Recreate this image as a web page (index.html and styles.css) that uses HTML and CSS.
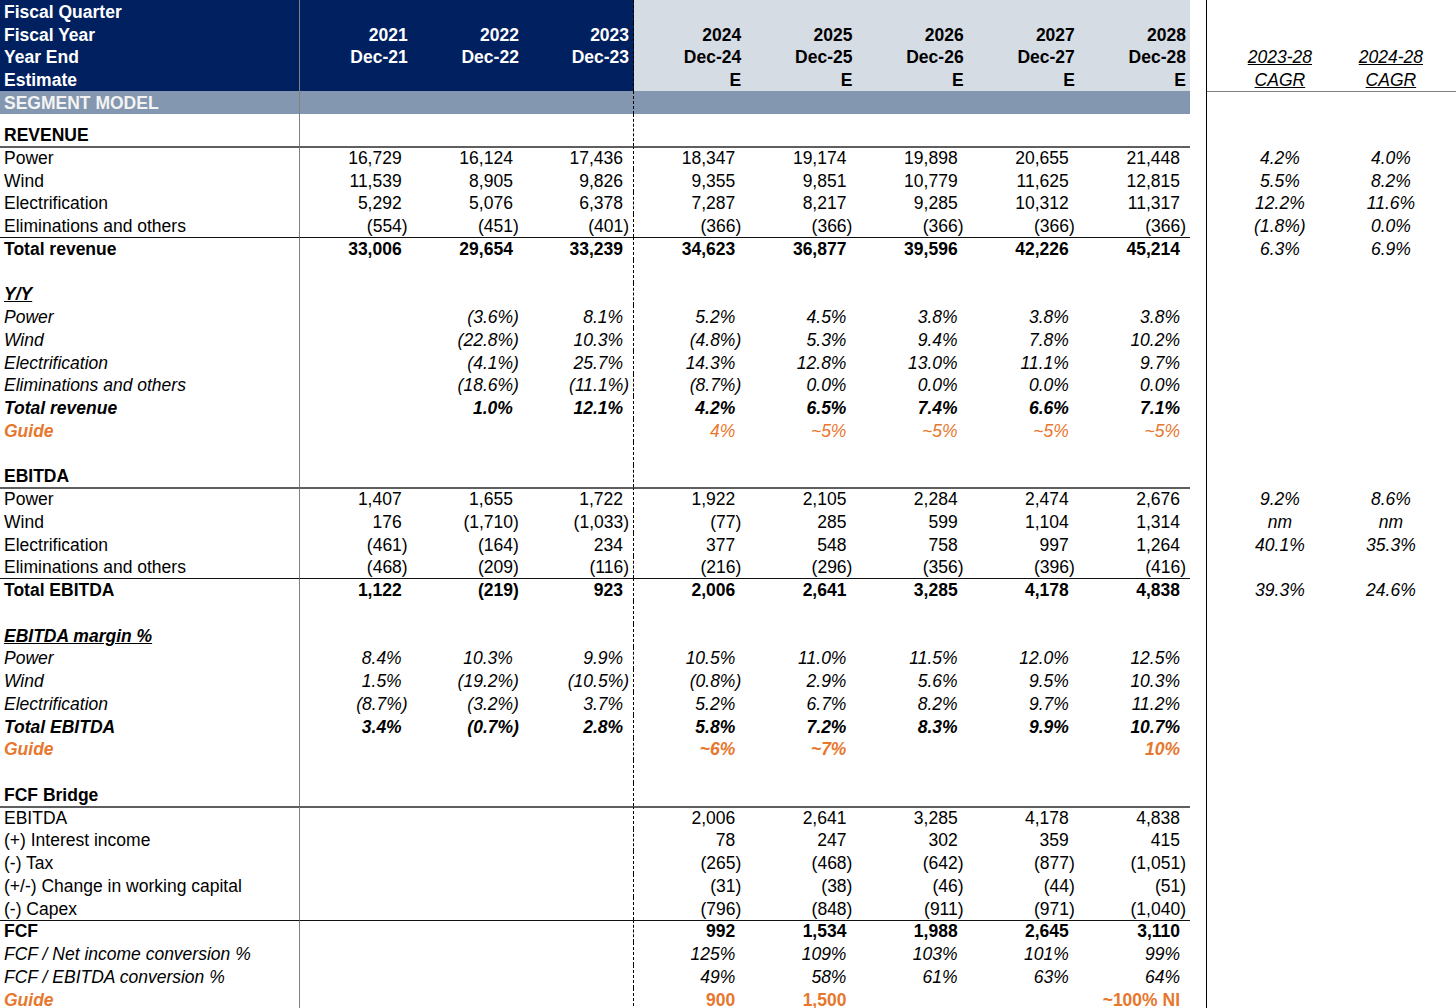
FILE: index.html
```html
<!DOCTYPE html>
<html>
<head>
<meta charset="utf-8">
<title>Segment Model</title>
<link rel="stylesheet" href="styles.css">
</head>
<body>
<div class="sheet">
  <div class="r hd"><div>Fiscal Quarter</div><div></div><div></div><div></div><div></div><div></div><div></div><div></div><div></div><div></div></div>
  <div class="r hd"><div>Fiscal Year</div><div>2021</div><div>2022</div><div>2023</div><div>2024</div><div>2025</div><div>2026</div><div>2027</div><div>2028</div><div></div></div>
  <div class="r hd"><div>Year End</div><div>Dec-21</div><div>Dec-22</div><div>Dec-23</div><div>Dec-24</div><div>Dec-25</div><div>Dec-26</div><div>Dec-27</div><div>Dec-28</div><div></div><div></div><div><span class="u">2023-28</span></div><div><span class="u">2024-28</span></div></div>
  <div class="r hd"><div>Estimate</div><div></div><div></div><div></div><div>E</div><div>E</div><div>E</div><div>E</div><div>E</div><div></div><div></div><div><span class="u">CAGR</span></div><div><span class="u">CAGR</span></div></div>
  <div class="r seg"><div>SEGMENT MODEL</div><div></div><div></div><div></div><div></div><div></div><div></div><div></div><div></div><div></div><div></div><div></div><div></div><div></div></div>

  <div class="r tall b"><div>REVENUE</div><div></div><div></div><div></div><div></div><div></div><div></div><div></div><div></div><div></div></div>
  <div class="r tg"><div>Power</div><div>16,729</div><div>16,124</div><div>17,436</div><div>18,347</div><div>19,174</div><div>19,898</div><div>20,655</div><div>21,448</div><div></div><div></div><div>4.2%</div><div>4.0%</div></div>
  <div class="r"><div>Wind</div><div>11,539</div><div>8,905</div><div>9,826</div><div>9,355</div><div>9,851</div><div>10,779</div><div>11,625</div><div>12,815</div><div></div><div></div><div>5.5%</div><div>8.2%</div></div>
  <div class="r"><div>Electrification</div><div>5,292</div><div>5,076</div><div>6,378</div><div>7,287</div><div>8,217</div><div>9,285</div><div>10,312</div><div>11,317</div><div></div><div></div><div>12.2%</div><div>11.6%</div></div>
  <div class="r"><div>Eliminations and others</div><div><span class="ng">(554)</span></div><div><span class="ng">(451)</span></div><div><span class="ng">(401)</span></div><div><span class="ng">(366)</span></div><div><span class="ng">(366)</span></div><div><span class="ng">(366)</span></div><div><span class="ng">(366)</span></div><div><span class="ng">(366)</span></div><div></div><div></div><div>(1.8%)</div><div>0.0%</div></div>
  <div class="r tk b"><div>Total revenue</div><div>33,006</div><div>29,654</div><div>33,239</div><div>34,623</div><div>36,877</div><div>39,596</div><div>42,226</div><div>45,214</div><div></div><div></div><div>6.3%</div><div>6.9%</div></div>
  <div class="r"><div></div><div></div><div></div><div></div><div></div><div></div><div></div><div></div><div></div><div></div></div>

  <div class="r"><div><span class="sh">Y/Y</span></div><div></div><div></div><div></div><div></div><div></div><div></div><div></div><div></div><div></div></div>
  <div class="r it"><div>Power</div><div></div><div><span class="ng">(3.6%)</span></div><div>8.1%</div><div>5.2%</div><div>4.5%</div><div>3.8%</div><div>3.8%</div><div>3.8%</div><div></div></div>
  <div class="r it"><div>Wind</div><div></div><div><span class="ng">(22.8%)</span></div><div>10.3%</div><div><span class="ng">(4.8%)</span></div><div>5.3%</div><div>9.4%</div><div>7.8%</div><div>10.2%</div><div></div></div>
  <div class="r it"><div>Electrification</div><div></div><div><span class="ng">(4.1%)</span></div><div>25.7%</div><div>14.3%</div><div>12.8%</div><div>13.0%</div><div>11.1%</div><div>9.7%</div><div></div></div>
  <div class="r it"><div>Eliminations and others</div><div></div><div><span class="ng">(18.6%)</span></div><div><span class="ng">(11.1%)</span></div><div><span class="ng">(8.7%)</span></div><div>0.0%</div><div>0.0%</div><div>0.0%</div><div>0.0%</div><div></div></div>
  <div class="r it b"><div>Total revenue</div><div></div><div>1.0%</div><div>12.1%</div><div>4.2%</div><div>6.5%</div><div>7.4%</div><div>6.6%</div><div>7.1%</div><div></div></div>
  <div class="r gd"><div>Guide</div><div></div><div></div><div></div><div>4%</div><div>~5%</div><div>~5%</div><div>~5%</div><div>~5%</div><div></div></div>
  <div class="r"><div></div><div></div><div></div><div></div><div></div><div></div><div></div><div></div><div></div><div></div></div>

  <div class="r b"><div>EBITDA</div><div></div><div></div><div></div><div></div><div></div><div></div><div></div><div></div><div></div></div>
  <div class="r tg"><div>Power</div><div>1,407</div><div>1,655</div><div>1,722</div><div>1,922</div><div>2,105</div><div>2,284</div><div>2,474</div><div>2,676</div><div></div><div></div><div>9.2%</div><div>8.6%</div></div>
  <div class="r"><div>Wind</div><div>176</div><div><span class="ng">(1,710)</span></div><div><span class="ng">(1,033)</span></div><div><span class="ng">(77)</span></div><div>285</div><div>599</div><div>1,104</div><div>1,314</div><div></div><div></div><div>nm</div><div>nm</div></div>
  <div class="r"><div>Electrification</div><div><span class="ng">(461)</span></div><div><span class="ng">(164)</span></div><div>234</div><div>377</div><div>548</div><div>758</div><div>997</div><div>1,264</div><div></div><div></div><div>40.1%</div><div>35.3%</div></div>
  <div class="r"><div>Eliminations and others</div><div><span class="ng">(468)</span></div><div><span class="ng">(209)</span></div><div><span class="ng">(116)</span></div><div><span class="ng">(216)</span></div><div><span class="ng">(296)</span></div><div><span class="ng">(356)</span></div><div><span class="ng">(396)</span></div><div><span class="ng">(416)</span></div><div></div></div>
  <div class="r tk b"><div>Total EBITDA</div><div>1,122</div><div><span class="ng">(219)</span></div><div>923</div><div>2,006</div><div>2,641</div><div>3,285</div><div>4,178</div><div>4,838</div><div></div><div></div><div>39.3%</div><div>24.6%</div></div>
  <div class="r"><div></div><div></div><div></div><div></div><div></div><div></div><div></div><div></div><div></div><div></div></div>

  <div class="r"><div><span class="sh">EBITDA margin %</span></div><div></div><div></div><div></div><div></div><div></div><div></div><div></div><div></div><div></div></div>
  <div class="r it"><div>Power</div><div>8.4%</div><div>10.3%</div><div>9.9%</div><div>10.5%</div><div>11.0%</div><div>11.5%</div><div>12.0%</div><div>12.5%</div><div></div></div>
  <div class="r it"><div>Wind</div><div>1.5%</div><div><span class="ng">(19.2%)</span></div><div><span class="ng">(10.5%)</span></div><div><span class="ng">(0.8%)</span></div><div>2.9%</div><div>5.6%</div><div>9.5%</div><div>10.3%</div><div></div></div>
  <div class="r it"><div>Electrification</div><div><span class="ng">(8.7%)</span></div><div><span class="ng">(3.2%)</span></div><div>3.7%</div><div>5.2%</div><div>6.7%</div><div>8.2%</div><div>9.7%</div><div>11.2%</div><div></div></div>
  <div class="r it b"><div>Total EBITDA</div><div>3.4%</div><div><span class="ng">(0.7%)</span></div><div>2.8%</div><div>5.8%</div><div>7.2%</div><div>8.3%</div><div>9.9%</div><div>10.7%</div><div></div></div>
  <div class="r gd gdb"><div>Guide</div><div></div><div></div><div></div><div>~6%</div><div>~7%</div><div></div><div></div><div>10%</div><div></div></div>
  <div class="r"><div></div><div></div><div></div><div></div><div></div><div></div><div></div><div></div><div></div><div></div></div>

  <div class="r b"><div>FCF Bridge</div><div></div><div></div><div></div><div></div><div></div><div></div><div></div><div></div><div></div></div>
  <div class="r tg"><div>EBITDA</div><div></div><div></div><div></div><div>2,006</div><div>2,641</div><div>3,285</div><div>4,178</div><div>4,838</div><div></div></div>
  <div class="r"><div>(+) Interest income</div><div></div><div></div><div></div><div>78</div><div>247</div><div>302</div><div>359</div><div>415</div><div></div></div>
  <div class="r"><div>(-) Tax</div><div></div><div></div><div></div><div><span class="ng">(265)</span></div><div><span class="ng">(468)</span></div><div><span class="ng">(642)</span></div><div><span class="ng">(877)</span></div><div><span class="ng">(1,051)</span></div><div></div></div>
  <div class="r"><div>(+/-) Change in working capital</div><div></div><div></div><div></div><div><span class="ng">(31)</span></div><div><span class="ng">(38)</span></div><div><span class="ng">(46)</span></div><div><span class="ng">(44)</span></div><div><span class="ng">(51)</span></div><div></div></div>
  <div class="r"><div>(-) Capex</div><div></div><div></div><div></div><div><span class="ng">(796)</span></div><div><span class="ng">(848)</span></div><div><span class="ng">(911)</span></div><div><span class="ng">(971)</span></div><div><span class="ng">(1,040)</span></div><div></div></div>
  <div class="r tk b"><div>FCF</div><div></div><div></div><div></div><div>992</div><div>1,534</div><div>1,988</div><div>2,645</div><div>3,110</div><div></div></div>
  <div class="r it"><div>FCF / Net income conversion %</div><div></div><div></div><div></div><div>125%</div><div>109%</div><div>103%</div><div>101%</div><div>99%</div><div></div></div>
  <div class="r it"><div>FCF / EBITDA conversion %</div><div></div><div></div><div></div><div>49%</div><div>58%</div><div>61%</div><div>63%</div><div>64%</div><div></div></div>
  <div class="r gd gdb up"><div>Guide</div><div></div><div></div><div></div><div>900</div><div>1,500</div><div></div><div></div><div>~100% NI</div><div></div></div>
</div>
</body>
</html>
```

FILE: styles.css
```css
* { box-sizing: border-box; }

body {
  margin: 0;
  font-family: "Liberation Sans", Arial, sans-serif;
  font-size: 17.5px;
  color: #000;
  background: #fff;
}

.sheet { width: 1456px; }

.r {
  display: grid;
  grid-template-columns: 300px repeat(8, 111.2px) 17.4px 17.5px 111px 111px 1fr;
  height: 22.75px;
}
.r.tall { height: 32.25px; }

.r > div {
  display: flex;
  align-items: flex-end;
  justify-content: flex-end;
  padding: 0 9.5px 1px 0;
  line-height: 20px;
  white-space: nowrap;
}

/* header block */
.hd > div { font-weight: bold; }
.hd > div:nth-child(n+2) { padding-right: 3.5px; }
.hd > div:nth-child(-n+4) { background: #002060; color: #fff; }
.hd > div:nth-child(n+5):nth-child(-n+9) { background: #d6dce4; }

.seg > div:nth-child(-n+9) { background: #8497b0; color: #f3f3f3; font-weight: bold; }
.seg > div:nth-child(n+11) { border-top: 1px solid #7f7f7f; }

/* column structure */
.r > div:nth-child(1) {
  justify-content: flex-start;
  padding-left: 4px;
  padding-right: 0;
  border-right: 1px solid #808080;
}
.r > div:nth-child(4) { border-right: 1px dashed #000; }
.r > div:nth-child(10) { border-right: 1px solid #000; padding: 0; }

/* horizontal rules */
.tg > div:nth-child(-n+9) { border-top: 2px solid #5f5f5f; }
.tk > div:nth-child(-n+9) { border-top: 1px solid #111; }

/* text styles */
.b > div { font-weight: bold; }
.it > div { font-style: italic; }
.gd > div { color: #e8772e; font-style: italic; }
.gd > div:first-child { font-weight: bold; }
.gdb > div { font-weight: bold; }
.up > div:nth-child(n+2) { font-style: normal; }

.sh { font-weight: bold; font-style: italic; text-decoration: underline; }
.u { text-decoration: underline; }
.ng { margin-right: -6px; }

/* CAGR columns */
.r > div:nth-child(n+11) {
  justify-content: center;
  padding-right: 0;
  font-style: italic;
  font-weight: normal;
}
```
